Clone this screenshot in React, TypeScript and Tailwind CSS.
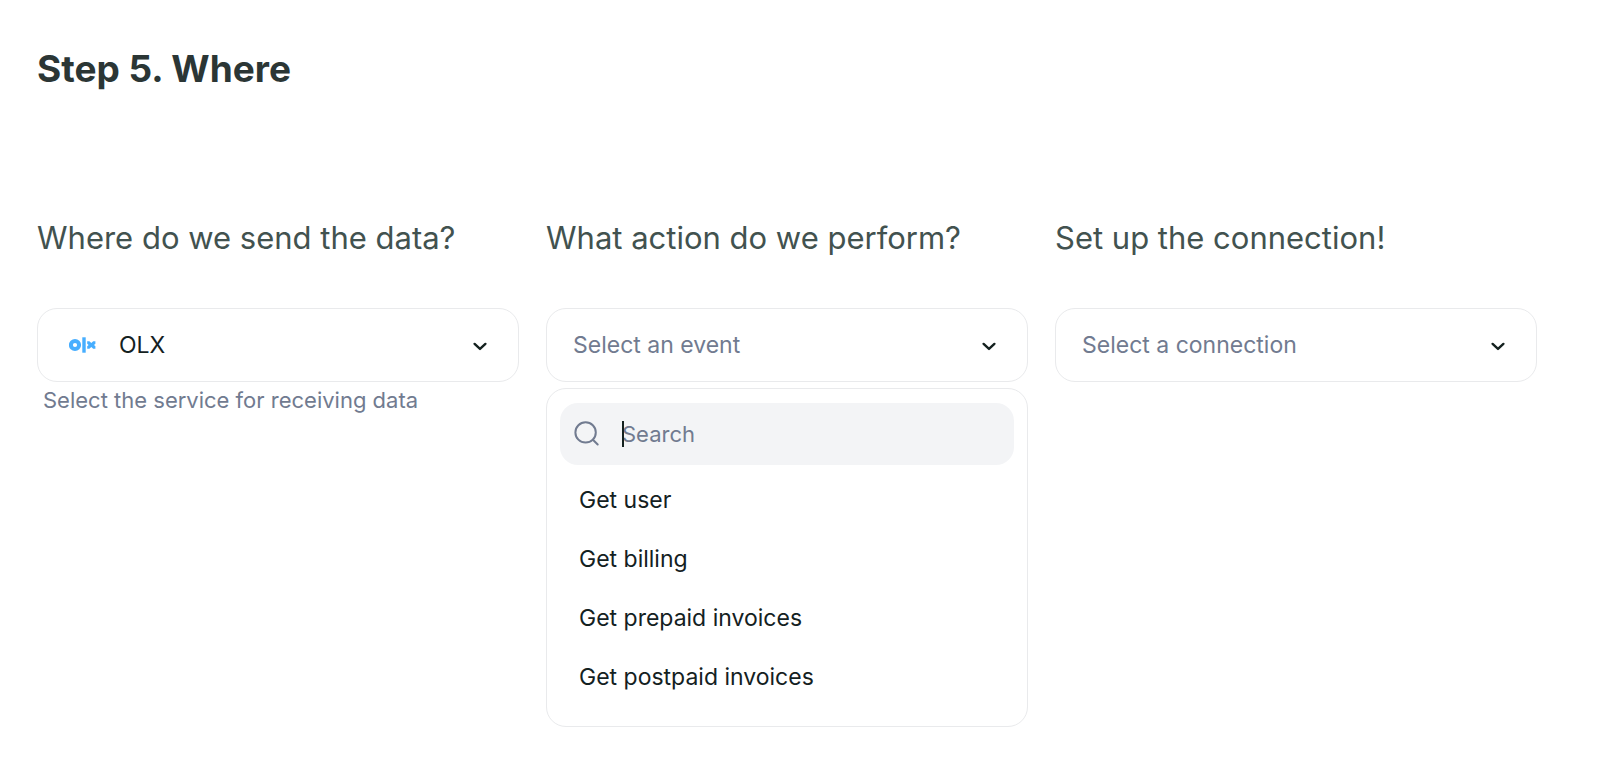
import type { ReactNode } from "react";

const events = ["Get user", "Get billing", "Get prepaid invoices", "Get postpaid invoices"];

function Chevron() {
  return (
    <svg
      viewBox="0 0 16 12"
      className="pointer-events-none h-3 w-4 shrink-0"
      fill="none"
      stroke="#14211f"
      strokeWidth="2.4"
      strokeLinecap="round"
      strokeLinejoin="round"
      aria-hidden="true"
    >
      <path d="M2.6 4.9 8 9.9l5.4-5" />
    </svg>
  );
}

function OlxLogo() {
  return (
    <svg viewBox="0 0 27 16" className="h-4 w-[27px]" aria-hidden="true">
      <circle cx="6" cy="8" r="4.1" fill="none" stroke="#47aeff" strokeWidth="4" />
      <rect x="13.3" y="0.3" width="3.4" height="15.4" fill="#47aeff" />
      <path d="M18.2 4.2h2.2l1.9 1.7 1.9-1.7h2.2v2.5L25 8l1.4 1.3v2.5h-2.2l-1.9-1.7-1.9 1.7h-2.2V9.3L19.6 8l-1.4-1.3z" fill="#47aeff" />
    </svg>
  );
}

function SearchIcon() {
  return (
    <svg
      viewBox="0 0 26 26"
      className="size-[26px] shrink-0"
      fill="none"
      stroke="#717b90"
      strokeWidth="2"
      strokeLinecap="round"
      aria-hidden="true"
    >
      <circle cx="11.6" cy="11.4" r="10.2" />
      <path d="m18.9 18.7 4.8 4.8" />
    </svg>
  );
}

function Column({ title, id, children }: { title: string; id: string; children: ReactNode }) {
  return (
    <section className="min-w-0">
      <h2 className="mb-[50px] text-[31px] leading-10 whitespace-nowrap text-[#42524f]">
        <label htmlFor={id}>{title}</label>
      </h2>
      {children}
    </section>
  );
}

export default function App() {
  return (
    <main
      className="min-h-screen bg-white pt-11 pr-[63px] pb-11 pl-[37px] text-[23px] text-[#14211f]"
      style={{ fontFamily: 'Inter, "Liberation Sans", sans-serif' }}
    >
      <h1 className="mb-[124px] text-[37px] leading-[50px] font-bold text-[#2b3635]">Step 5. Where</h1>
      <div className="grid grid-cols-3 items-start gap-[27px]">
        <Column title="Where do we send the data?" id="service">
          <div className="relative flex items-center">
            <span className="pointer-events-none absolute left-8">
              <OlxLogo />
            </span>
            <select
              id="service"
              aria-describedby="service-hint"
              className="h-[74px] w-full appearance-none rounded-[20px] border border-[#e9eaec] bg-transparent pr-16 pl-[81px]"
            >
              <option>OLX</option>
            </select>
            <span className="pointer-events-none absolute right-[31px]">
              <Chevron />
            </span>
          </div>
          <p id="service-hint" className="pt-0.5 pl-1.5 text-[22px] leading-8 text-[#717b90]">
            Select the service for receiving data
          </p>
        </Column>

        <Column title="What action do we perform?" id="event">
          <button
            id="event"
            type="button"
            aria-haspopup="listbox"
            aria-expanded="true"
            className="flex h-[74px] w-full items-center justify-between rounded-[20px] border border-[#e9eaec] pr-[30px] pl-[26px] text-[#717b90]"
          >
            Select an event
            <Chevron />
          </button>
          <div className="mt-1.5 rounded-[20px] border border-[#e9eaec] px-[13px] pt-3.5 pb-[19px]">
            <label className="flex h-[62px] items-center rounded-[18px] bg-[#f3f4f6] px-3.5">
              <SearchIcon />
              <span className="relative ml-[22px] flex min-w-0 flex-1 items-center">
                <span className="absolute left-0 h-[26px] w-0.5 bg-[#14211f]" />
                <input
                  type="text"
                  aria-label="Search"
                  placeholder="Search"
                  className="w-full bg-transparent text-[22px] caret-transparent outline-none placeholder:text-[#717b90]"
                />
              </span>
            </label>
            <ul role="listbox" aria-label="Events" className="mt-1.5">
              {events.map((event) => (
                <li key={event} role="option" aria-selected="false" className="px-[19px] text-[23px] leading-[59px]">
                  {event}
                </li>
              ))}
            </ul>
          </div>
        </Column>

        <Column title="Set up the connection!" id="connection">
          <div className="relative flex items-center">
            <select
              id="connection"
              className="h-[74px] w-full appearance-none rounded-[20px] border border-[#e9eaec] bg-transparent pr-16 pl-[26px] text-[#717b90]"
            >
              <option>Select a connection</option>
            </select>
            <span className="pointer-events-none absolute right-[31px]">
              <Chevron />
            </span>
          </div>
        </Column>
      </div>
    </main>
  );
}
